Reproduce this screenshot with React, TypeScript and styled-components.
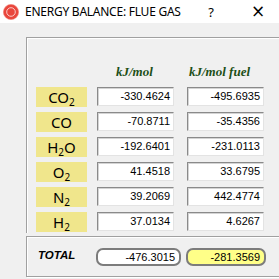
import React from "react";
import styled, { createGlobalStyle } from "styled-components";

const Global = createGlobalStyle`
  html, body { margin: 0; padding: 0; background: #f0f0f0; overflow: hidden; }
  body { font-family: "Liberation Sans", Arial, sans-serif; width: 279px; height: 279px; }
`;

const Window = styled.div`
  width: 279px;
  height: 279px;
  background: #f0f0f0;
  display: flex;
  flex-direction: column;
`;

const TitleBar = styled.div`
  height: 23px;
  width: 279px;
  flex: none;
  background: #ffffff;
  display: flex;
  align-items: center;
`;

const AppIcon = styled.svg`
  display: block;
  flex: none;
  margin-left: 3px;
  width: 16px;
  height: 16px;
`;

const Title = styled.div`
  width: 178px;
  flex: none;
  margin-left: 6px;
  font-family: "Noto Sans", "Liberation Sans", sans-serif;
  font-size: 12px;
  letter-spacing: -0.25px;
  color: #000;
  white-space: nowrap;
`;

const Help = styled.div`
  width: 16px;
  flex: none;
  text-align: center;
  font-family: "Noto Sans", "Liberation Sans", sans-serif;
  font-size: 13px;
  color: #000;
`;

const Close = styled.div`
  width: 30px;
  flex: none;
  height: 23px;
  margin-left: 24px;
  text-align: center;
  font-family: "DejaVu Sans", sans-serif;
  font-size: 17px;
  line-height: 23px;
  color: #000;
`;

const Content = styled.div`
  display: flex;
  flex-direction: column;
  padding: 14px 0 0 26px;
`;

const Frame = styled.div`
  width: 248px;
  border: 1px solid #a0a0a0;
  border-bottom: none;
  box-shadow: inset 1px 1px 0 #ffffff, 1px 0 0 #ffffff;
  padding: 0 0 1px 9px;
  display: flex;
  flex-direction: column;
  gap: 5px;
`;

const HeaderRow = styled.div`
  height: 49px;
  display: flex;
  align-items: flex-end;
  margin-bottom: -5px;
`;

const Spacer = styled.div`
  width: 51px;
  margin-right: 10px;
`;

const HeaderCell = styled.div<{ $indent: number; $gapLeft?: number }>`
  width: 77px;
  box-sizing: border-box;
  padding-left: ${(p) => p.$indent}px;
  margin-left: ${(p) => p.$gapLeft ?? 0}px;
  padding-bottom: 9px;
  font-family: "Liberation Serif", "Times New Roman", serif;
  font-style: italic;
  font-weight: bold;
  font-size: 13px;
  line-height: 13px;
  color: #1d4f17;
  white-space: nowrap;
`;

const Row = styled.div`
  display: flex;
  align-items: flex-start;
  height: 20px;
`;

const Species = styled.div`
  width: 51px;
  height: 20px;
  margin-right: 10px;
  background: #f0e68c;
  text-align: center;
  font-family: "Noto Sans", "Liberation Sans", sans-serif;
  font-size: 15px;
  line-height: 20px;
  color: #000;
  white-space: nowrap;
`;

const Sub = styled.span`
  font-size: 10px;
  position: relative;
  top: 3px;
`;

const Field = styled.div<{ $gapLeft?: number }>`
  width: 77px;
  height: 19px;
  box-sizing: border-box;
  margin-left: ${(p) => p.$gapLeft ?? 0}px;
  background: #ffffff;
  border-style: solid;
  border-width: 1px;
  border-color: #8a8a8a #e3e3e3 #e3e3e3 #8a8a8a;
  box-shadow: inset 1px 1px 0 #d4d4d4;
  padding-right: 3px;
  text-align: right;
  font-size: 11px;
  line-height: 17px;
  color: #000;
`;

const TotalFrame = styled.div`
  margin-top: 3px;
  width: 248px;
  height: 39px;
  border: 1px solid #a0a0a0;
  box-shadow: inset 1px 1px 0 #ffffff, 1px 1px 0 #ffffff;
  padding-left: 11px;
  display: flex;
  align-items: center;
`;

const TotalLabel = styled.div`
  width: 58px;
  margin-bottom: 3px;
  font-weight: bold;
  font-style: italic;
  font-size: 11.5px;
  color: #000;
`;

const TotalBox = styled.div<{ $w: number; $bg: string; $gapLeft?: number }>`
  width: ${(p) => p.$w}px;
  height: 18px;
  box-sizing: border-box;
  margin-left: ${(p) => p.$gapLeft ?? 0}px;
  border: 2px solid #7c7c7c;
  border-radius: 7px;
  background: ${(p) => p.$bg};
  padding-right: 4px;
  text-align: right;
  font-size: 11px;
  line-height: 14px;
  color: #000;
`;

const rows: { name: React.ReactNode; a: string; b: string }[] = [
  { name: <>CO<Sub>2</Sub></>, a: "-330.4624", b: "-495.6935" },
  { name: <>CO</>, a: "-70.8711", b: "-35.4356" },
  { name: <>H<Sub>2</Sub>O</>, a: "-192.6401", b: "-231.0113" },
  { name: <>O<Sub>2</Sub></>, a: "41.4518", b: "33.6795" },
  { name: <>N<Sub>2</Sub></>, a: "39.2069", b: "442.4774" },
  { name: <>H<Sub>2</Sub></>, a: "37.0134", b: "4.6267" },
];

export default function App() {
  return (
    <Window>
      <Global />
      <TitleBar>
        <AppIcon viewBox="0 0 16 16">
          <circle cx="8" cy="8" r="7.6" fill="#e9463c" />
          <circle cx="8" cy="8" r="7.6" fill="none" stroke="#f27a70" strokeWidth="0.6" />
          <circle cx="8" cy="8" r="4.3" fill="none" stroke="#ffffff" strokeWidth="0.8" opacity="0.9" />
        </AppIcon>
        <Title>ENERGY BALANCE: FLUE GAS</Title>
        <Help>?</Help>
        <Close>{"\u00D7"}</Close>
      </TitleBar>
      <Content>
        <Frame>
          <HeaderRow>
            <Spacer />
            <HeaderCell $indent={19}>kJ/mol</HeaderCell>
            <HeaderCell $indent={2} $gapLeft={13}>kJ/mol fuel</HeaderCell>
          </HeaderRow>
          {rows.map((r, i) => (
            <Row key={i}>
              <Species>{r.name}</Species>
              <Field>{r.a}</Field>
              <Field $gapLeft={13}>{r.b}</Field>
            </Row>
          ))}
        </Frame>
        <TotalFrame>
          <TotalLabel>TOTAL</TotalLabel>
          <TotalBox $w={85} $bg="#ffffff">-476.3015</TotalBox>
          <TotalBox $w={80} $bg="#ffff88" $gapLeft={5}>-281.3569</TotalBox>
        </TotalFrame>
      </Content>
    </Window>
  );
}
